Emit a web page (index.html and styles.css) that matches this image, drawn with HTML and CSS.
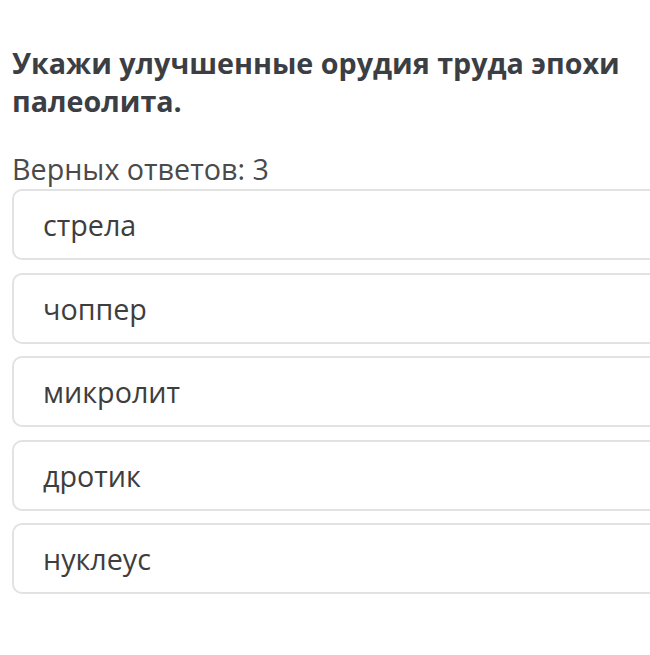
FILE: index.html
```html
<!DOCTYPE html>
<html lang="ru">
<head>
<meta charset="utf-8">
<link rel="stylesheet" href="styles.css">
</head>
<body>
<div class="question">
  <h1 class="title">Укажи улучшенные орудия труда эпохи палеолита.</h1>
  <div class="hint">Верных ответов: 3</div>
  <div class="options">
    <div class="option">стрела</div>
    <div class="option">чоппер</div>
    <div class="option">микролит</div>
    <div class="option">дротик</div>
    <div class="option">нуклеус</div>
  </div>
</div>
</body>
</html>
```
FILE: styles.css
```css
html, body {
  margin: 0;
  padding: 0;
  background: #ffffff;
}
body {
  font-family: "Open Sans", "Liberation Sans", sans-serif;
  overflow: hidden;
}
.question {
  padding: 44px 0 0 12px;
}
.title {
  margin: 0;
  font-size: 28.7px;
  font-weight: 700;
  line-height: 38px;
  color: #3b3e43;
  width: 634px;
}
.hint {
  margin-top: 32px;
  font-size: 28.7px;
  line-height: 34px;
  color: #4a4a4a;
}
.options {
  display: flex;
  flex-direction: column;
  gap: 12.5px;
  margin-top: 3px;
  width: 660px;
}
.option {
  box-sizing: border-box;
  height: 71px;
  border: 2px solid #e2e2e2;
  border-radius: 10px;
  padding-left: 29px;
  display: flex;
  align-items: center;
  font-size: 28.7px;
  color: #3e3e3e;
}
```
